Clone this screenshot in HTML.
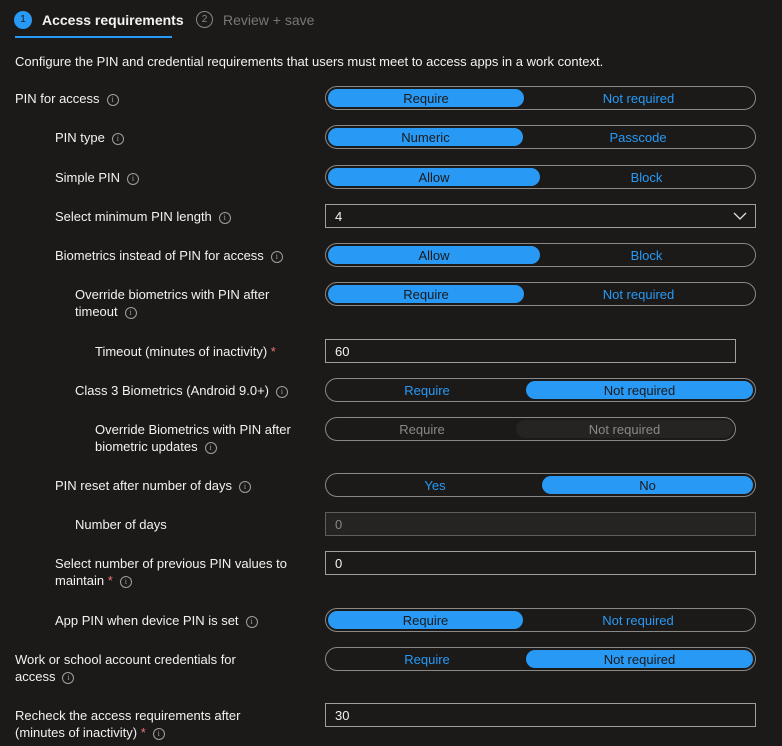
<!DOCTYPE html>
<html><head><meta charset="utf-8"><style>
body{margin:0;width:782px;height:746px;background:#1b1a19;font-family:"Segoe UI","Liberation Sans",sans-serif;font-size:13px;color:#f3f2f1;position:relative;overflow:hidden}
.a{position:absolute;white-space:nowrap}
.l{position:absolute;line-height:17px;white-space:nowrap}
.i{display:inline-block;width:10px;height:10px;border:1px solid #a19f9d;border-radius:50%;font-size:8px;line-height:10px;text-align:center;color:#a19f9d;vertical-align:1px;margin-left:7px;font-family:"Liberation Serif",serif}
.t{position:absolute;left:325px;width:429px;height:22px;border:1px solid #8a8886;border-radius:12px}
.p{position:absolute;top:2px;height:18px;background:#2899f5;border-radius:9px}
.s{position:absolute;top:0;line-height:23px;text-align:center;color:#2899f5}
.s.on{color:#1b1a19}
.in{position:absolute;left:325px;width:420px;height:22px;border:1px solid #a19f9d;padding-left:9px;line-height:23px;color:#f3f2f1}
.r{color:#f1707b}
</style></head><body>
<div class="a" style="left:14px;top:11px;width:18px;height:18px;border-radius:50%;background:#2899f5;color:#1b1a19;font-size:10px;text-align:center;line-height:18px">1</div>
<div class="a" style="left:42px;top:11px;font-weight:bold;font-size:14px;line-height:18px">Access requirements</div>
<div class="a" style="left:15px;top:36px;width:157px;height:2px;background:#2899f5"></div>
<div class="a" style="left:196px;top:11px;width:15px;height:15px;border-radius:50%;border:1.5px solid #8a8886;color:#8a8886;font-size:10px;text-align:center;line-height:15px">2</div>
<div class="a" style="left:223px;top:11px;font-size:14px;line-height:18px;color:#797775">Review + save</div>
<div class="a" style="left:15px;top:53px;line-height:17px">Configure the PIN and credential requirements that users must meet to access apps in a work context.</div>

<div class="l" style="left:15px;top:90px">PIN for access<span class="i">i</span></div>
<div class="t" style="top:86px"><div class="p" style="left:2px;width:196px"></div><div class="s on" style="left:2px;width:196px">Require</div><div class="s" style="left:198px;width:229px">Not required</div></div>

<div class="l" style="left:55px;top:129px">PIN type<span class="i">i</span></div>
<div class="t" style="top:125px"><div class="p" style="left:2px;width:195px"></div><div class="s on" style="left:2px;width:195px">Numeric</div><div class="s" style="left:197px;width:230px">Passcode</div></div>

<div class="l" style="left:55px;top:169px">Simple PIN<span class="i">i</span></div>
<div class="t" style="top:165px"><div class="p" style="left:2px;width:212px"></div><div class="s on" style="left:2px;width:212px">Allow</div><div class="s" style="left:214px;width:213px">Block</div></div>

<div class="l" style="left:55px;top:208px">Select minimum PIN length<span class="i">i</span></div>
<div class="in" style="top:204px">4<svg style="position:absolute;right:8px;top:7px" width="14" height="8"><path d="M1 1l6 6 6-6" stroke="#e1dfdd" fill="none" stroke-width="1.3"/></svg></div>

<div class="l" style="left:55px;top:247px">Biometrics instead of PIN for access<span class="i">i</span></div>
<div class="t" style="top:243px"><div class="p" style="left:2px;width:212px"></div><div class="s on" style="left:2px;width:212px">Allow</div><div class="s" style="left:214px;width:213px">Block</div></div>

<div class="l" style="left:75px;top:286px">Override biometrics with PIN after<br>timeout<span class="i">i</span></div>
<div class="t" style="top:282px"><div class="p" style="left:2px;width:196px"></div><div class="s on" style="left:2px;width:196px">Require</div><div class="s" style="left:198px;width:229px">Not required</div></div>

<div class="l" style="left:95px;top:343px">Timeout (minutes of inactivity) <span class="r">*</span></div>
<div class="in" style="top:339px;width:400px">60</div>

<div class="l" style="left:75px;top:382px">Class 3 Biometrics (Android 9.0+)<span class="i">i</span></div>
<div class="t" style="top:378px"><div class="p" style="left:200px;width:227px"></div><div class="s" style="left:2px;width:198px">Require</div><div class="s on" style="left:200px;width:227px">Not required</div></div>

<div class="l" style="left:95px;top:421px">Override Biometrics with PIN after<br>biometric updates<span class="i">i</span></div>
<div class="t" style="top:417px;width:409px;border-color:#8a8886"><div class="p" style="left:190px;width:217px;background:#252423"></div><div class="s" style="left:2px;width:188px;color:#8a8886">Require</div><div class="s" style="left:190px;width:217px;color:#8a8886">Not required</div></div>

<div class="l" style="left:55px;top:477px">PIN reset after number of days<span class="i">i</span></div>
<div class="t" style="top:473px"><div class="p" style="left:216px;width:211px"></div><div class="s" style="left:2px;width:214px">Yes</div><div class="s on" style="left:216px;width:211px">No</div></div>

<div class="l" style="left:75px;top:516px">Number of days</div>
<div class="in" style="top:512px;background:#252423;border-color:#605e5c;color:#8a8886">0</div>

<div class="l" style="left:55px;top:555px">Select number of previous PIN values to<br>maintain <span class="r">*</span><span class="i">i</span></div>
<div class="in" style="top:551px">0</div>

<div class="l" style="left:55px;top:612px">App PIN when device PIN is set<span class="i">i</span></div>
<div class="t" style="top:608px"><div class="p" style="left:2px;width:195px"></div><div class="s on" style="left:2px;width:195px">Require</div><div class="s" style="left:197px;width:230px">Not required</div></div>

<div class="l" style="left:15px;top:651px">Work or school account credentials for<br>access<span class="i">i</span></div>
<div class="t" style="top:647px"><div class="p" style="left:200px;width:227px"></div><div class="s" style="left:2px;width:198px">Require</div><div class="s on" style="left:200px;width:227px">Not required</div></div>

<div class="l" style="left:15px;top:707px">Recheck the access requirements after<br>(minutes of inactivity) <span class="r">*</span><span class="i">i</span></div>
<div class="in" style="top:703px">30</div>
</body></html>
